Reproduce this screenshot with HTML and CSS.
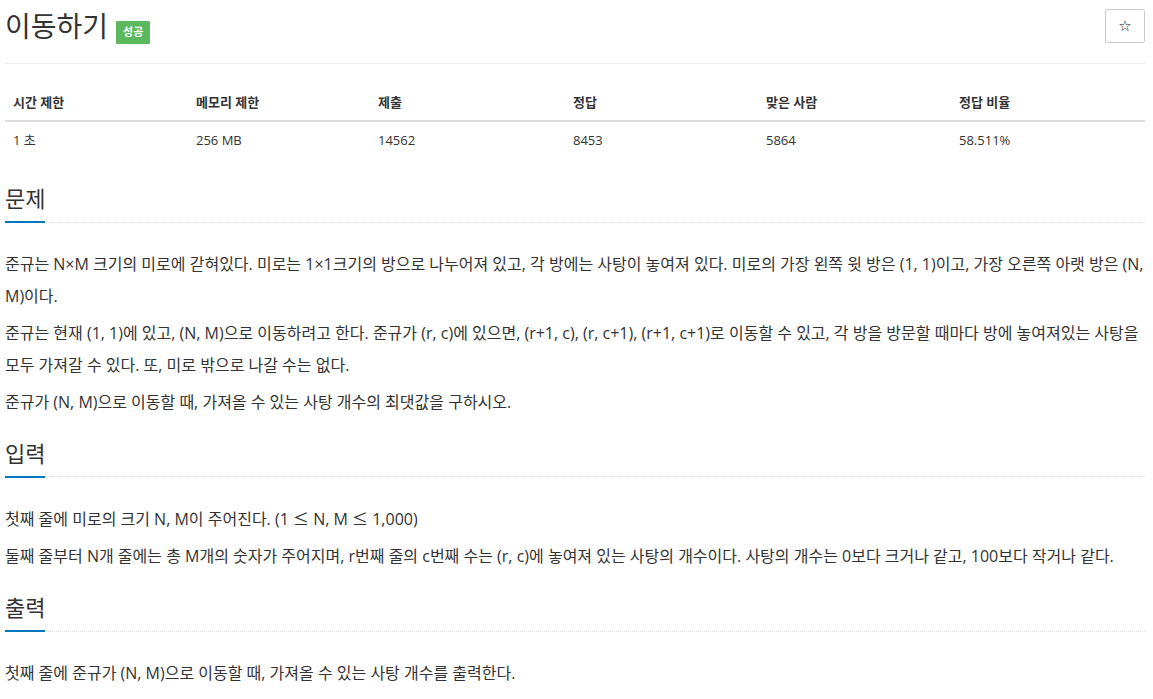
FILE: index.html
```html
<!DOCTYPE html>
<html lang="ko">
<head>
<meta charset="utf-8">
<title>이동하기</title>
<link rel="stylesheet" href="styles.css">
</head>
<body>
<div class="container">
  <div class="page-header">
    <h1 class="title">이동하기</h1>
    <span class="badge">성공</span>
    <button class="star-btn" type="button">☆</button>
  </div>

  <table class="info">
    <colgroup>
      <col class="c1"><col class="c2"><col class="c3"><col class="c4"><col class="c5"><col class="c6">
    </colgroup>
    <thead>
      <tr><th>시간 제한</th><th>메모리 제한</th><th>제출</th><th>정답</th><th>맞은 사람</th><th>정답 비율</th></tr>
    </thead>
    <tbody>
      <tr><td>1 초</td><td>256 MB</td><td>14562</td><td>8453</td><td>5864</td><td>58.511%</td></tr>
    </tbody>
  </table>

  <section class="section">
    <div class="headline"><h2>문제</h2></div>
    <div class="text">
      <p>준규는 N×M 크기의 미로에 갇혀있다. 미로는 1×1크기의 방으로 나누어져 있고, 각 방에는 사탕이 놓여져 있다. 미로의 가장 왼쪽 윗 방은 (1, 1)이고, 가장 오른쪽 아랫 방은 (N, M)이다.</p>
      <p>준규는 현재 (1, 1)에 있고, (N, M)으로 이동하려고 한다. 준규가 (r, c)에 있으면, (r+1, c), (r, c+1), (r+1, c+1)로 이동할 수 있고, 각 방을 방문할 때마다 방에 놓여져있는 사탕을 모두 가져갈 수 있다. 또, 미로 밖으로 나갈 수는 없다.</p>
      <p>준규가 (N, M)으로 이동할 때, 가져올 수 있는 사탕 개수의 최댓값을 구하시오.</p>
    </div>
  </section>

  <section class="section">
    <div class="headline"><h2>입력</h2></div>
    <div class="text">
      <p>첫째 줄에 미로의 크기 N, M이 주어진다. (1 <span class="sym">≤</span> N, M <span class="sym">≤</span> 1,000)</p>
      <p>둘째 줄부터 N개 줄에는 총 M개의 숫자가 주어지며, r번째 줄의 c번째 수는 (r, c)에 놓여져 있는 사탕의 개수이다. 사탕의 개수는 0보다 크거나 같고, 100보다 작거나 같다.</p>
    </div>
  </section>

  <section class="section">
    <div class="headline"><h2>출력</h2></div>
    <div class="text">
      <p>첫째 줄에 준규가 (N, M)으로 이동할 때, 가져올 수 있는 사탕 개수를 출력한다.</p>
    </div>
  </section>
</div>
</body>
</html>
```

FILE: styles.css
```css
* { box-sizing: border-box; }
html, body { margin: 0; padding: 0; background: #fff; }
body {
  font-family: "Open Sans", "Noto Sans CJK KR", sans-serif;
  color: #333;
}
.container {
  width: 1153px;
  padding: 0 8px 0 5px;
}
.page-header {
  display: flex;
  align-items: flex-start;
  padding-top: 9px;
  padding-bottom: 19px;
  border-bottom: 1px solid #eee;
  margin-bottom: 20px;
}
.title {
  margin: 0;
  font-size: 28px;
  line-height: 34px;
  font-weight: 400;
  color: #333;
}
.badge {
  margin-left: 8px;
  margin-top: 12px;
  background: #5cb85c;
  color: #fff;
  font-size: 11px;
  font-weight: 700;
  line-height: 16px;
  padding: 3px 7px 4px;
  border-radius: 1px;
}
.star-btn {
  margin-left: auto;
  width: 40px;
  height: 34px;
  border: 1px solid #ccc;
  border-radius: 2px;
  background: #fff;
  color: #111;
  font-size: 15px;
  font-family: "DejaVu Sans", sans-serif;
  padding: 0;
  line-height: 32px;
}
.info {
  width: 1140px;
  border-collapse: collapse;
  font-size: 13px;
  margin-bottom: 25px;
}
.c1 { width: 183px; }
.c2 { width: 182px; }
.c3 { width: 195px; }
.c4 { width: 193px; }
.c5 { width: 193px; }
.c6 { width: 194px; }
.info th, .info td {
  text-align: left;
  padding: 8px;
  line-height: 20px;
}
.info th {
  font-weight: 700;
  border-bottom: 2px solid #ddd;
}
.section { margin-top: 20px; }
.headline {
  display: flex;
  border-bottom: 1px dotted #ddd;
}
.headline h2 {
  margin: 0 0 -1.5px;
  font-size: 22px;
  line-height: 30px;
  font-weight: 400;
  padding-bottom: 8px;
  border-bottom: 2px solid #0076c0;
}
.text { margin-top: 25px; }
.text p {
  margin: 0 0 5px;
  font-size: 16px;
  line-height: 32px;
}
.sym { font-family: "Noto Sans CJK KR", sans-serif; }
```
